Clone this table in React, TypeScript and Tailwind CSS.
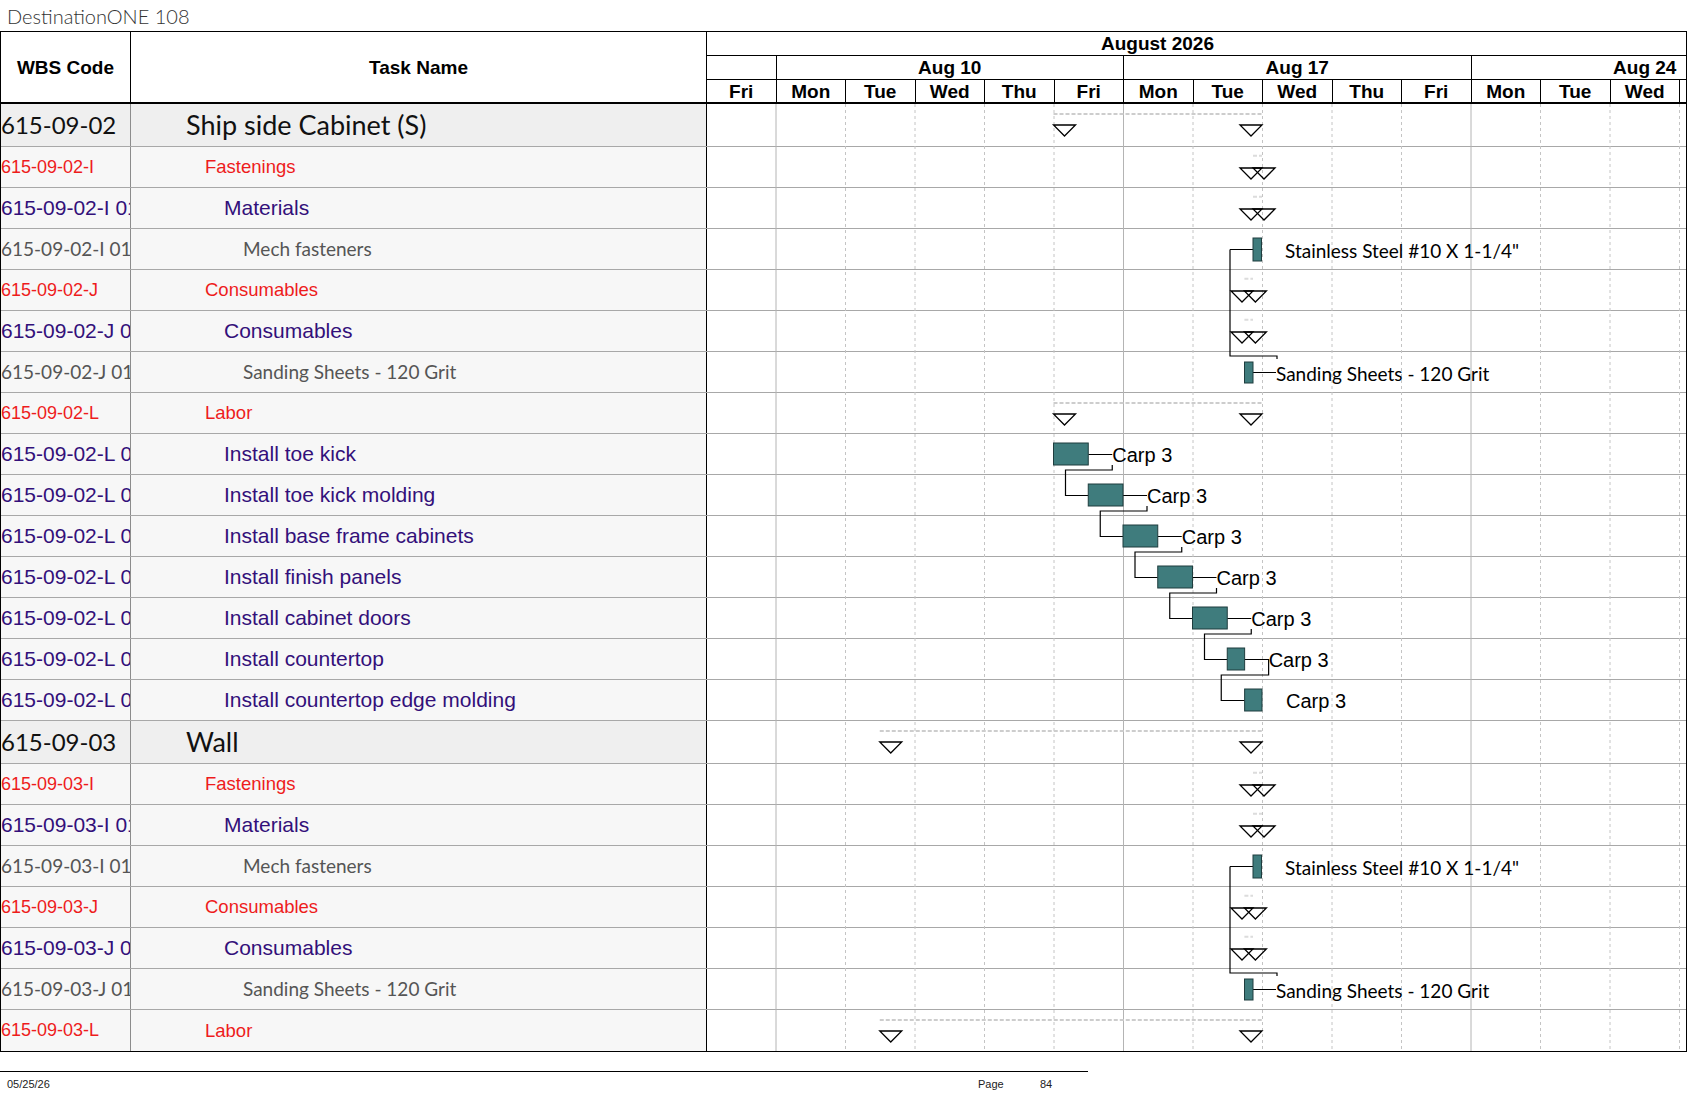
import React from 'react';

// ---------------------------------------------------------------------------
// Gantt print page – DestinationONE 108
// ---------------------------------------------------------------------------

type Kind = 'sum' | 'red' | 'purple' | 'gray';

interface Row {
  code: string;
  name: string;
  kind: Kind;
}

const ARIAL = "font-['Liberation_Sans',Arial,sans-serif]";
const CALIBRI = "font-['Lato','Noto_Sans',sans-serif]";

const section = (n: string, title: string, labor: string[]): Row[] => [
  { code: `615-09-${n}`, name: title, kind: 'sum' },
  { code: `615-09-${n}-I`, name: 'Fastenings', kind: 'red' },
  { code: `615-09-${n}-I 01`, name: 'Materials', kind: 'purple' },
  { code: `615-09-${n}-I 01-01`, name: 'Mech fasteners', kind: 'gray' },
  { code: `615-09-${n}-J`, name: 'Consumables', kind: 'red' },
  { code: `615-09-${n}-J 01`, name: 'Consumables', kind: 'purple' },
  { code: `615-09-${n}-J 01-01`, name: 'Sanding Sheets - 120 Grit', kind: 'gray' },
  { code: `615-09-${n}-L`, name: 'Labor', kind: 'red' },
  ...labor.map((name, i) => ({
    code: `615-09-${n}-L 0${i + 1}`,
    name,
    kind: 'purple' as Kind,
  })),
];

const rows: Row[] = [
  ...section('02', 'Ship side Cabinet (S)', [
    'Install toe kick',
    'Install toe kick molding',
    'Install base frame cabinets',
    'Install finish panels',
    'Install cabinet doors',
    'Install countertop',
    'Install countertop edge molding',
  ]),
  ...section('03', 'Wall', []),
];

// last column is only a sliver at the page edge, so it carries no label
const days = ['Fri', 'Mon', 'Tue', 'Wed', 'Thu', 'Fri', 'Mon', 'Tue', 'Wed', 'Thu', 'Fri', 'Mon', 'Tue', 'Wed', ''];

const codeCls: Record<Kind, string> = {
  sum: `${CALIBRI} text-[24px] text-[#111]`,
  red: `${ARIAL} text-[18px] text-[#ee1c1c]`,
  purple: `${ARIAL} text-[21px] text-[#33107a]`,
  gray: `${CALIBRI} text-[19px] text-[#555]`,
};

const nameCls: Record<Kind, string> = {
  sum: `${CALIBRI} text-[27px] text-[#111] pl-[55px]`,
  red: `${ARIAL} text-[18.5px] text-[#ee1c1c] pl-[74px]`,
  purple: `${ARIAL} text-[21px] text-[#33107a] pl-[93px]`,
  gray: `${CALIBRI} text-[19px] text-[#555] pl-[112px]`,
};

// page coordinates of the time scale
const dayX = (d: number) => 706 + 69.5 * d;
const tri = (x: number, top: number) => `M${x} ${top} H${x + 22} L${x + 11} ${top + 11} Z`;

function Header() {
  return (
    <div className={`flex h-[72px] border-b-2 border-black ${ARIAL} font-bold text-[19px] leading-none`}>
      <div className="w-[130px] shrink-0 border-r border-black flex items-center justify-center">WBS Code</div>
      <div className="w-[576px] shrink-0 border-r border-black flex items-center justify-center">Task Name</div>
      <div className="flex-1 flex flex-col overflow-hidden">
        <div className="h-[24px] shrink-0 border-b border-black flex items-center">
          <div className="w-[901px] text-center">August 2026</div>
        </div>
        <div className="h-[24px] shrink-0 border-b border-black flex">
          <div className="w-[69.5px] shrink-0 border-r border-black" />
          {['Aug 10', 'Aug 17', 'Aug 24'].map((w) => (
            <div key={w} className="w-[347.5px] shrink-0 border-r border-black flex items-center justify-center">
              {w}
            </div>
          ))}
        </div>
        <div className="flex-1 flex">
          {days.map((d, i) => (
            <div key={i} className="w-[69.5px] shrink-0 border-r border-black flex items-center justify-center">
              {d}
            </div>
          ))}
        </div>
      </div>
    </div>
  );
}

function Chart() {
  const grid = [];
  for (let d = 1; d <= 14; d++) {
    const week = d === 1 || d === 6 || d === 11;
    grid.push(
      <line
        key={d}
        x1={dayX(d) + 0.5}
        x2={dayX(d) + 0.5}
        y1={104}
        y2={1051}
        stroke={week ? '#b4b4b4' : '#c4c4c4'}
        strokeWidth={1}
        strokeDasharray={week ? undefined : '3 3'}
      />
    );
  }

  // summary rows (dashed span + start/end markers)
  const spans: { y: number; a: number; b: number; faint?: boolean }[] = [];
  const markers: { top: number; a: number; b: number }[] = [];
  [0, 617].forEach((off, s) => {
    const start = s === 0 ? dayX(5) : dayX(2.5);
    spans.push({ y: 114 + off, a: start, b: 1262 });
    markers.push({ top: 125 + off, a: start, b: 1262 });
    spans.push({ y: 155.7 + off, a: 1253, b: 1262, faint: true });
    markers.push({ top: 168 + off, a: 1253, b: 1262 });
    spans.push({ y: 196.7 + off, a: 1253, b: 1262, faint: true });
    markers.push({ top: 209 + off, a: 1253, b: 1262 });
    spans.push({ y: 278.7 + off, a: 1244.4, b: 1253, faint: true });
    markers.push({ top: 291 + off, a: 1244.4, b: 1253 });
    spans.push({ y: 319.7 + off, a: 1244.4, b: 1253, faint: true });
    markers.push({ top: 332 + off, a: 1244.4, b: 1253 });
    spans.push({ y: 403 + off, a: start, b: 1262 });
    markers.push({ top: 414 + off, a: start, b: 1262 });
  });

  const labor = [
    [5, 5.5],
    [5.5, 6],
    [6, 6.5],
    [6.5, 7],
    [7, 7.5],
    [7.5, 7.75],
    [7.75, 8],
  ].map(([a, b], i) => ({ a: dayX(a), b: dayX(b), t: 434 + 41 * i }));

  const links: string[] = [];
  labor.forEach((bar, i) => {
    const next = labor[i + 1];
    if (!next) return;
    const lx = bar.b + 24;
    if (i < 5) {
      links.push(`M${bar.b} ${bar.t + 20.5} H${lx}`);
      links.push(`M${lx} ${bar.t + 31} V${bar.t + 36} H${bar.a + 12} V${next.t + 20.5} H${next.a}`);
    } else {
      links.push(`M${bar.b} ${bar.t + 20.5} H${lx} V${bar.t + 36} H${bar.a - 6} V${next.t + 20.5} H${next.a}`);
    }
  });

  const barFill = '#3f7c7d';
  const barStroke = '#1f3d3e';

  return (
    <svg
      className="absolute left-[706px] top-0 pointer-events-none"
      width={979}
      height={947}
      viewBox="707 104 979 947"
    >
      {grid}
      {spans.map((s, i) => (
        <line
          key={i}
          x1={s.a}
          x2={s.b}
          y1={s.y}
          y2={s.y}
          stroke={s.faint ? '#dcdcdc' : '#cdcdcd'}
          strokeWidth={2}
          strokeDasharray="4 2"
        />
      ))}
      {markers.map((m, i) => (
        <g key={i} fill="none" stroke="#000" strokeWidth={1.3}>
          <path d={tri(m.a, m.top)} />
          <path d={tri(m.b - 22, m.top)} />
        </g>
      ))}

      {/* materials + consumables, both sections */}
      {[0, 617].map((off) => (
        <g key={off}>
          <path
            d={`M1230 ${249.5 + off} H1253 M1230 ${249.5 + off} V${356 + off} H1277 V${359 + off} M1253 ${372.5 + off} H1276`}
            fill="none"
            stroke="#000"
            strokeWidth={1.2}
          />
          <rect x={1253} y={238 + off} width={8.5} height={23} fill={barFill} stroke={barStroke} strokeWidth={1} />
          <rect x={1244.5} y={362 + off} width={8.5} height={21} fill={barFill} stroke={barStroke} strokeWidth={1} />
          <text
            x={1285}
            y={250 + off}
            dominantBaseline="central"
            fontFamily="Lato, 'Noto Sans', sans-serif"
            fontSize={19}
            fill="#000"
          >
            Stainless Steel #10 X 1-1/4"
          </text>
          <text
            x={1276}
            y={373 + off}
            dominantBaseline="central"
            fontFamily="Lato, 'Noto Sans', sans-serif"
            fontSize={19}
            fill="#000"
          >
            Sanding Sheets - 120 Grit
          </text>
        </g>
      ))}

      {/* labor tasks */}
      <path d={links.join(' ')} fill="none" stroke="#000" strokeWidth={1.2} />
      {labor.map((bar, i) => (
        <g key={i}>
          <rect
            x={bar.a}
            y={bar.t + 9}
            width={bar.b - bar.a}
            height={22}
            fill={barFill}
            stroke={barStroke}
            strokeWidth={1}
          />
          <text
            x={bar.b + 24}
            y={bar.t + 21}
            dominantBaseline="central"
            fontFamily="'Liberation Sans', Arial, sans-serif"
            fontSize={20}
            fill="#000"
          >
            Carp 3
          </text>
        </g>
      ))}
    </svg>
  );
}

function Body() {
  return (
    <div className="relative">
      {rows.map((r, i) => {
        const sum = r.kind === 'sum';
        const last = i === rows.length - 1;
        const bg = sum ? 'bg-[#efefef]' : 'bg-[#f7f7f7]';
        return (
          <div
            key={i}
            className={`flex ${sum ? 'h-[43px]' : 'h-[41px]'} ${last ? '' : 'border-b border-[#a8a8a8]'}`}
          >
            <div
              className={`w-[130px] shrink-0 border-r border-[#8c8c8c] overflow-hidden whitespace-nowrap flex items-center leading-tight ${bg} ${codeCls[r.kind]}`}
            >
              {r.code}
            </div>
            <div
              className={`w-[576px] shrink-0 border-r border-black whitespace-nowrap flex items-center leading-tight ${bg} ${nameCls[r.kind]}`}
            >
              {r.name}
            </div>
            <div className="flex-1 bg-white" />
          </div>
        );
      })}
      <Chart />
    </div>
  );
}

function Footer() {
  return (
    <div className={`mt-[19px] w-[1088px] border-t border-black ${ARIAL} text-[11px] leading-none text-[#222]`}>
      <div className="flex h-[25px] items-center">
        <span className="w-[978px] pl-[7px]">05/25/26</span>
        <span className="w-[62px]">Page</span>
        <span>84</span>
      </div>
    </div>
  );
}

export default function App() {
  return (
    <div className="w-[1687px] h-[1097px] bg-white overflow-hidden text-black">
      <div className={`h-[31px] pl-[7px] flex items-center ${CALIBRI} font-light text-[20px] leading-none text-[#333]`}>
        DestinationONE 108
      </div>
      <div className="border border-black">
        <Header />
        <Body />
      </div>
      <Footer />
    </div>
  );
}
